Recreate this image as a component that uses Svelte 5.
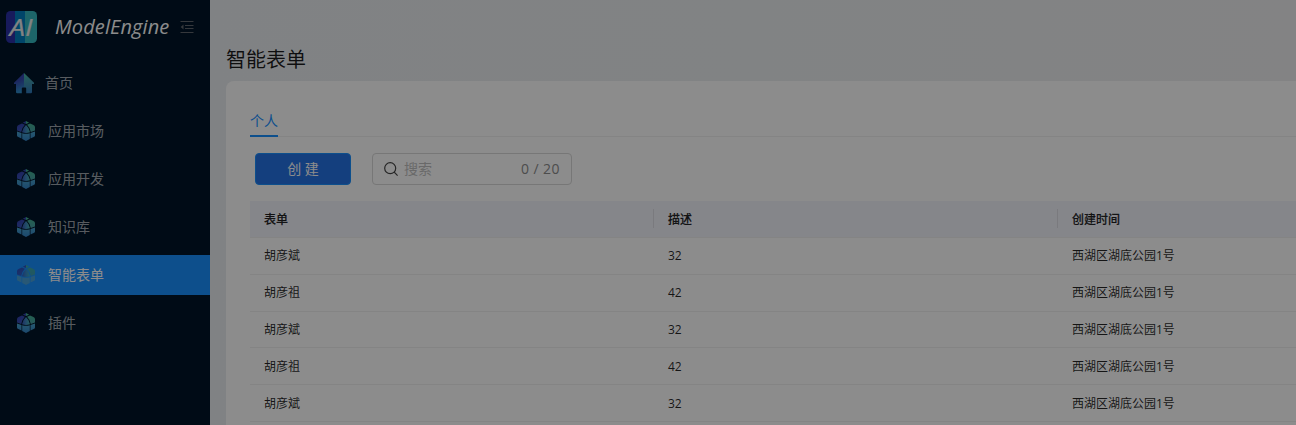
<script>
  const items = ['应用市场', '应用开发', '知识库', '智能表单', '插件'];
  const active = '智能表单';
  const rows = [
    ['胡彦斌', 32], ['胡彦祖', 42], ['胡彦斌', 32], ['胡彦祖', 42], ['胡彦斌', 32]
  ];
  const address = '西湖区湖底公园1号';
</script>

<div class="layout">
  <aside>
    <div class="brand">
      <svg class="logo" width="31" height="32" viewBox="0 0 31 32">
        <defs><clipPath id="round"><rect width="31" height="32" rx="4.500" /></clipPath></defs>
        <g clip-path="url(#round)">
          <rect width="10" height="32" fill="#2a30a8" />
          <rect x="9" width="11" height="32" fill="#007fc0" />
          <rect x="19" width="13" height="32" fill="#36b9bf" />
        </g>
        <text x="15" y="25" text-anchor="middle" textLength="23" lengthAdjust="spacingAndGlyphs">AI</text>
      </svg>
      <span class="name">ModelEngine</span>
      <svg class="fold" width="14" height="14" viewBox="0 0 14 14" fill="none" stroke="#62676d">
        <path d="M.5 1.500h13M5 5.500h8.500M5 8.500h8.500M.5 12.500h13" />
        <path d="M3.500 4.500v5L.7 7z" fill="#62676d" stroke="none" />
      </svg>
    </div>
    <nav>
      <div class="item home">
        <svg width="20" height="21" viewBox="0 0 20 21">
          <defs>
            <linearGradient id="homeL" x1="0" y1="0" x2=".2" y2="1"><stop stop-color="#343caf" /><stop offset=".45" stop-color="#3348ad" /><stop offset="1" stop-color="#2f8bc8" /></linearGradient>
            <linearGradient id="homeR" x1="0" y1="0" x2="0" y2="1"><stop stop-color="#48b8a5" /><stop offset=".5" stop-color="#3e92af" /><stop offset="1" stop-color="#307abf" /></linearGradient>
          </defs>
          <path fill="url(#homeL)" d="M10 0L0 9.800V11h2v8a1.200 1.200 0 0 0 1.200 1.200h4.600v-4.700q0-1 1-1H10z" />
          <path fill="url(#homeR)" d="M10 0l10 9.800V11h-2v8a1.200 1.200 0 0 1-1.200 1.200h-4.600v-4.700q0-1-1-1H10z" />
        </svg>
        <span>首页</span>
      </div>
      {#each items as label, i}
        <div class="item" class:active={label === active}>
          <svg width="20" height="20" viewBox="0 0 20 20">
            <defs>
              <linearGradient id="l{i}" x1="0" y1="0" x2=".5" y2="1"><stop stop-color="#3238a8" /><stop offset="1" stop-color="#3855b8" /></linearGradient>
              <linearGradient id="r{i}" x1="0" y1="0" x2="0" y2="1"><stop stop-color="#43b58f" /><stop offset="1" stop-color="#459fa5" /></linearGradient>
              <linearGradient id="b{i}" x1="0" y1="0" x2="0" y2="1"><stop stop-color="#46a2cd" /><stop offset="1" stop-color="#3382c6" /></linearGradient>
              <linearGradient id="c{i}"><stop stop-color="#3656b6" /><stop offset=".5" stop-color="#3f87bf" /><stop offset="1" stop-color="#44b2ac" /></linearGradient>
            </defs>
            <path fill="url(#l{i})" d="M1 6Q1 4.500 3 3.800L6 2.600L8.900 3.700Q6.200 6.200 5.200 11L1 9.600zM6.800 1.700L10 0v3z" />
            <path fill="url(#r{i})" d="M19 6Q19 4.500 17 3.800L14 2.600L11.100 3.700Q13.800 6.200 14.800 11L19 9.600zM13.200 1.700L10 0v3z" />
            <path fill="url(#c{i})" d="M10 4Q13 6.500 14 11.300q-4 1.200-8 0Q7 6.500 10 4z" />
            <path class="base" fill="url(#b{i})" d="M1 10.500l4.500 1.500v5.600L1.800 15.700Q1 15.300 1 14.500zM19 10.500l-4.500 1.500v5.600l3.700-1.900q.8-.4.8-1.200zM6.200 12.200q3.800 1 7.600 0v5.800L10 20l-3.800-2z" />
          </svg>
          <span>{label}</span>
        </div>
      {/each}
    </nav>
  </aside>

  <main>
    <h1>智能表单</h1>
    <section>
      <div class="tabs"><span class="tab">个人</span></div>
      <div class="tools">
        <button>创 建</button>
        <label>
          <svg width="14" height="14" viewBox="0 0 14 14" fill="none" stroke="#454545" stroke-width="1.200"><circle cx="6.200" cy="6.200" r="5.500" /><path d="M10.200 10.200l3.400 3.400" /></svg>
          <span class="hint">搜索</span>
          <span class="count">0 / 20</span>
        </label>
      </div>
      <div class="table">
        <div class="row head"><span>表单</span><span>描述</span><span>创建时间</span></div>
        {#each rows as [name, age]}
          <div class="row"><span>{name}</span><span>{age}</span><span>{address}</span></div>
        {/each}
      </div>
    </section>
  </main>
</div>
<div class="mask"></div>

<style>
  :global(body) { overflow: hidden; }
  .layout {
    display: flex; width: 1296px; height: 425px; overflow: hidden;
    font-family: "Open Sans", "Noto Sans CJK SC", sans-serif; font-size: 14px;
  }
  .mask { position: fixed; inset: 0; background: rgba(0, 0, 0, .45); }
  aside { flex: 0 0 210px; background: #001529; }
  .brand { display: flex; align-items: center; height: 54px; padding-left: 6px; box-sizing: border-box; }
  .logo text { font: italic 400 23px "Open Sans", sans-serif; fill: #ededed; stroke: #ededed; stroke-width: .2px; }
  .name { width: 115px; margin: 0 0 1px 18px; color: #fff; font-size: 20px; letter-spacing: .1px; font-style: italic; white-space: nowrap; }
  .fold { margin-left: 10px; }
  nav { padding-top: 9px; display: flex; flex-direction: column; gap: 8px; }
  .item { display: flex; align-items: center; height: 40px; padding-left: 16px; color: rgba(255, 255, 255, .65); }
  .item span { margin-left: 12px; line-height: 20px; }
  .home { padding-left: 14px; }
  .home span { margin-left: 11px; }
  .active { background: #1890ff; color: #fff; }
  .active svg { opacity: .8; }
  .active .base { fill: #57a5cf; }
  main { flex: 1; min-width: 0; padding: 45px 0 0 16px; background: linear-gradient(90deg, #eaedf1, #eeeff1); }
  h1 { margin: 0 0 6px; font-size: 20px; font-weight: 400; line-height: 30px; color: rgba(0, 0, 0, .88); }
  section { height: 500px; padding: 24px 0 0 24px; background: #fff; border-radius: 8px 0 0 0; }
  .tabs { display: flex; height: 31px; border-bottom: 1px solid #f0f0f0; }
  .tab { height: 30px; line-height: 32px; color: #1890ff; border-bottom: 2px solid #1890ff; }
  .tools { display: flex; gap: 21px; padding: 16px 0 0 5px; height: 48px; box-sizing: border-box; }
  button {
    width: 96px; height: 32px; padding: 0 0 2px; border: 1px solid #1890ff; border-radius: 4px;
    background: #2673e5; color: #fff; font: inherit;
  }
  label {
    display: flex; align-items: center; width: 200px; height: 32px; padding: 0 11px; box-sizing: border-box;
    border: 1px solid #d9d9d9; border-radius: 4px;
  }
  .hint { margin: 0 0 2px 6px; color: #bfbfbf; }
  .count { margin: 0 0 1px auto; color: #8c8c8c; font-size: 14px; letter-spacing: .45px; }
  .table { padding-top: 16px; font-size: 12px; line-height: 18.860px; color: rgba(0, 0, 0, .85); }
  .row { display: grid; grid-template-columns: 404px 404px 404px; height: 36.860px; box-sizing: border-box; border-bottom: 1px solid #f0f0f0; align-items: center; }
  .row span { padding: 2px 0 0 14px; }
  .head { background: #f2f4fc; }
  .head span { font-weight: 500; padding-top: 2px; line-height: 17px; -webkit-text-stroke: .2px; }
  .head span + span { box-shadow: -1px 0 #dedfe6; }
</style>
